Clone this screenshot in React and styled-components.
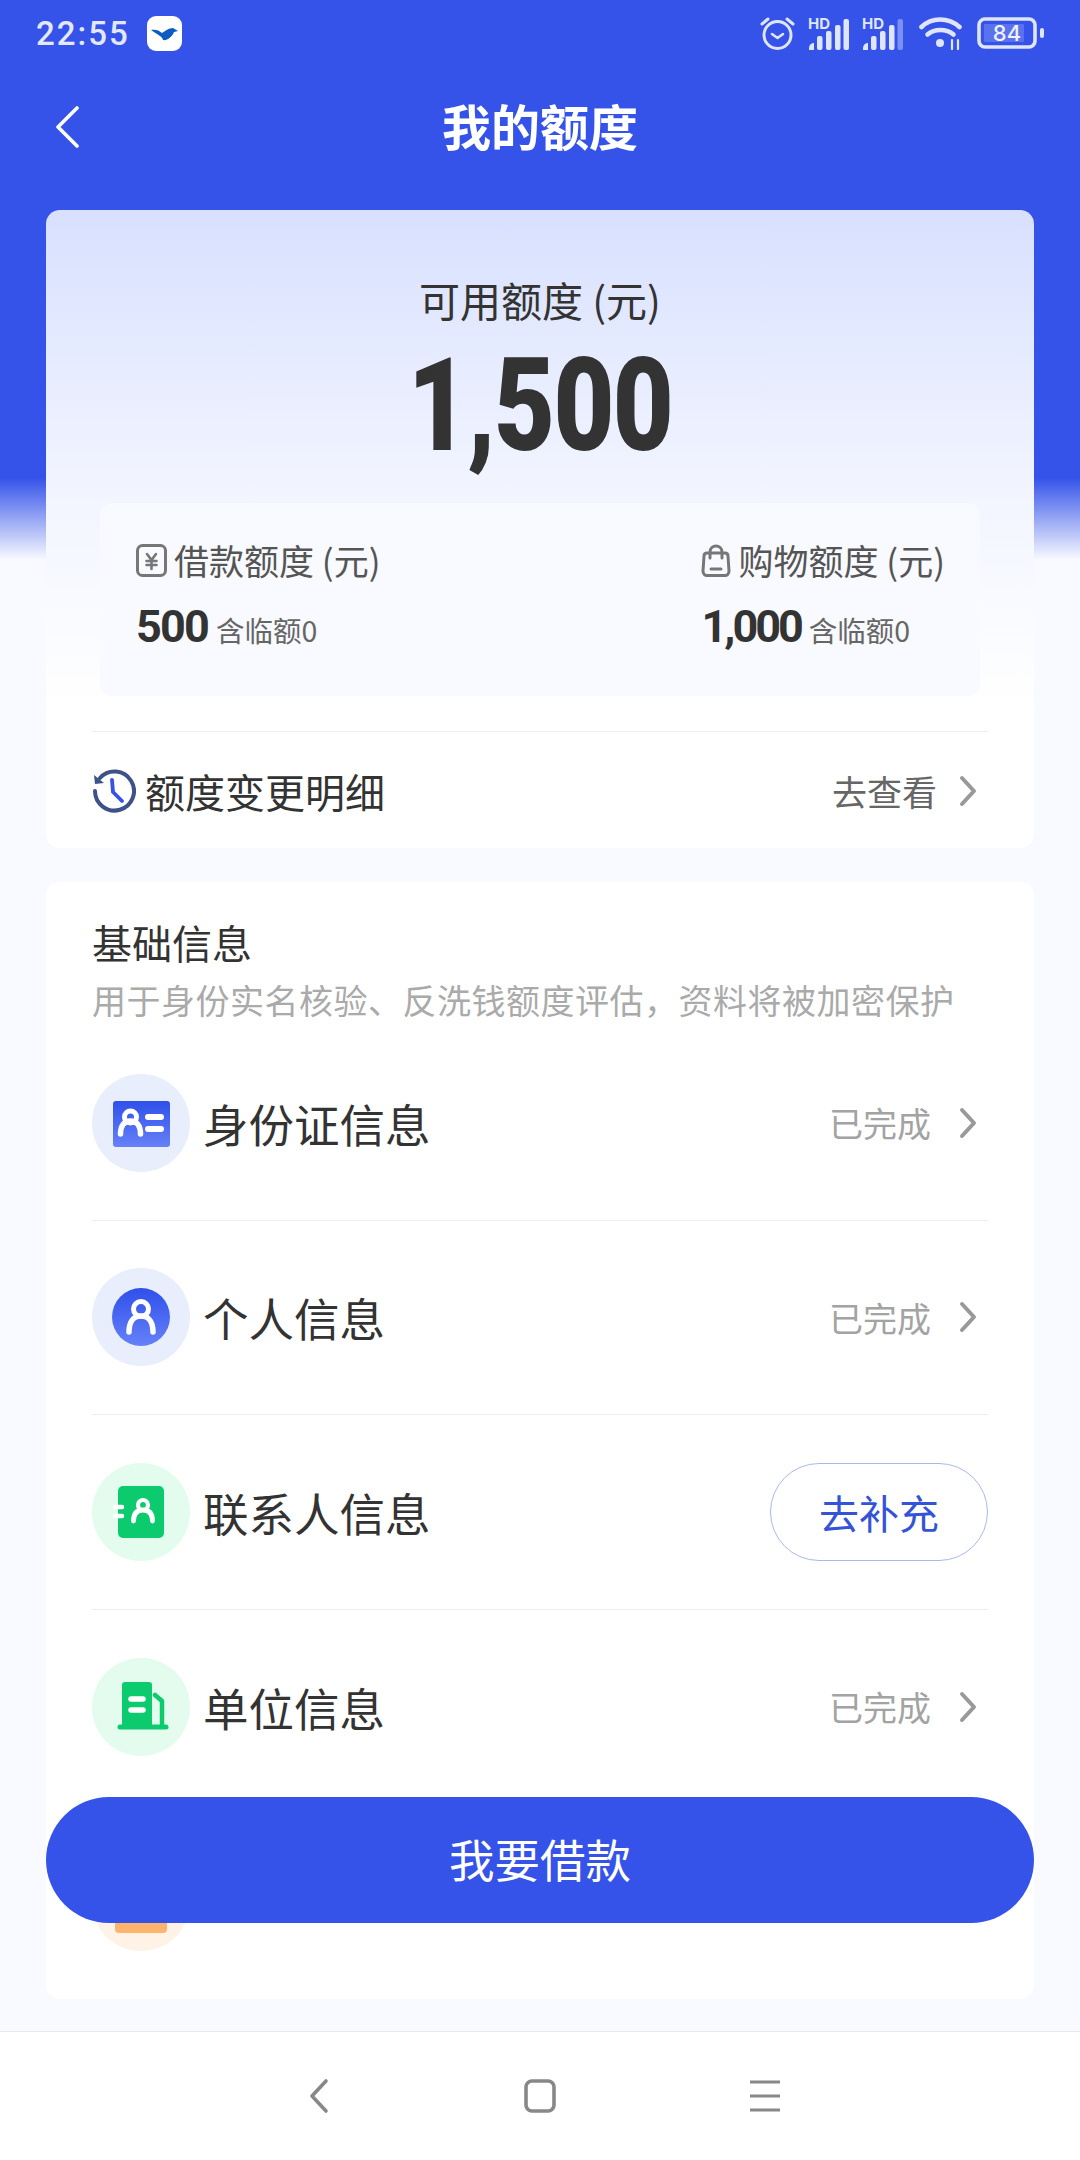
import React from 'react'
import styled, {createGlobalStyle} from 'styled-components'

const GlobalStyle = createGlobalStyle`
    html, body {
        margin: 0;
        padding: 0;
        background: #f8faff;
        font-family: "Noto Sans CJK SC", "Noto Sans", sans-serif;
    }
`;
const Page = styled.div`
    position: relative;
    width: 1080px;
    height: 2160px;
    overflow: hidden;
    display: flex;
    flex-direction: column;
    background: linear-gradient(180deg, #3553e9 0, #3553e9 478px, #f8faff 560px);
`;
const StatusBar = styled.div`
    height: 66px;
    padding: 0 35px 0 36px;
    display: flex;
    align-items: center;
    justify-content: space-between;
`;
const StatusGroup = styled.div`
    display: flex;
    align-items: center;
`;
const Time = styled.span`
    font-family: Roboto, sans-serif;
    font-weight: 500;
    font-size: 33px;
    letter-spacing: 2px;
    color: #e3e8fd;
    margin-right: 17px;
`;
const NavBar = styled.div`
    height: 122px;
    display: grid;
    grid-template-columns: 1fr auto 1fr;
    align-items: center;
    padding-left: 54px;
`;
const Title = styled.h1`
    margin: 0 0 4px;
    font-size: 49px;
    font-weight: 700;
    line-height: 60px;
    color: #fff;
    transform: translateX(-27px);
`;
const Content = styled.div`
    flex: 1;
    padding: 22px 46px 0;
    display: flex;
    flex-direction: column;
    gap: 34px;
`;
const LimitCard = styled.section`
    height: 638px;
    box-sizing: border-box;
    padding-top: 64px;
    border-radius: 14px;
    background: linear-gradient(180deg, #d8e0fe 0, #f2f5ff 280px, #fff 500px);
`;
const LimitLabel = styled.div`
    font-size: 41px;
    line-height: 50px;
    text-align: center;
    color: #333;
`;
const LimitAmount = styled.div`
    margin-top: 17px;
    height: 127px;
    font-family: Roboto, sans-serif;
    font-weight: 900;
    font-size: 130px;
    line-height: 130px;
    letter-spacing: -2px;
    text-align: center;
    color: #333;
    transform: scaleX(0.81);
`;
const SplitBox = styled.div`
    margin: 35px 54px 0;
    height: 193px;
    box-sizing: border-box;
    padding: 34px 35px 0 36px;
    display: flex;
    justify-content: space-between;
    background: #f8faff;
    border-radius: 12px;
`;
const SplitLabel = styled.div`
    display: flex;
    align-items: center;
    gap: 7px;
    font-size: 35px;
    line-height: 46px;
    color: #555;
`;
const SplitValue = styled.div`
    margin-top: 21px;
    display: flex;
    align-items: baseline;
    gap: 8px;
    line-height: 46px;
`;
const ValueNumber = styled.span`
    font-family: Roboto, sans-serif;
    font-weight: 700;
    font-size: 45px;
    letter-spacing: ${props => props.$tight ? '-3px' : '-1.8px'};
    color: #333;
`;
const ValueNote = styled.span`
    font-size: 28.5px;
    color: #666;
`;
const DetailRow = styled.div`
    margin: 35px 46px 0;
    height: 117px;
    border-top: 1.5px solid #eeeeee;
    display: flex;
    align-items: center;
    justify-content: space-between;
`;
const DetailName = styled.div`
    display: flex;
    align-items: center;
    gap: 9px;
    font-size: 40px;
    color: #333;
`;
const RowSide = styled.div`
    display: flex;
    align-items: center;
    gap: ${props => props.$muted ? '28px' : '22px'};
    padding-right: 11px;
    font-size: ${props => props.$muted ? '34px' : '35px'};
    color: ${props => props.$muted ? '#a3a3a3' : '#666'};
`;
const InfoCard = styled.section`
    padding: 35px 46px 0;
    border-radius: 14px;
    background: #fff;
`;
const InfoTitle = styled.div`
    font-size: 40px;
    line-height: 50px;
    color: #333;
`;
const InfoSub = styled.div`
    margin-top: 10px;
    margin-bottom: 3px;
    font-size: 34px;
    line-height: 46px;
    letter-spacing: 0.5px;
    white-space: nowrap;
    color: #aaa;
`;
const InfoRow = styled.div`
    height: 194.6px;
    box-sizing: border-box;
    display: flex;
    align-items: center;
    gap: 13px;
    border-bottom: ${props => props.$last ? 'none' : '1.5px solid #eeeeee'};
`;
const InfoName = styled.div`
    flex: 1;
    font-size: 45.5px;
    color: #333;
`;
const FillButton = styled.button`
    width: 218px;
    height: 98px;
    padding: 0;
    border: 1.5px solid #a9b8e8;
    border-radius: 49px;
    background: #fff;
    font-family: inherit;
    font-size: 40px;
    color: #3553d6;
`;
const LoanButton = styled.button`
    position: absolute;
    left: 46px;
    top: 1797px;
    width: 988px;
    height: 126px;
    padding: 0 0 4px;
    border: none;
    border-radius: 63px;
    background: #3553e9;
    font-family: inherit;
    font-size: 45.5px;
    color: #fff;
`;
const BottomNav = styled.nav`
    height: 129px;
    box-sizing: border-box;
    padding: 0 299px 0 306px;
    border-top: 1.5px solid #e8e8e8;
    background: #fff;
    display: flex;
    align-items: center;
    justify-content: space-between;
`;

const Chevron = ({color = '#999'}) => (
    <svg width="18" height="32" viewBox="0 0 18 32" fill="none">
        <path d="M3 3l12 13L3 29" stroke={color} strokeWidth="4" strokeLinecap="round" strokeLinejoin="round" />
    </svg>
);

const AppBadge = () => (
    <svg width="35" height="35" viewBox="0 0 35 35">
        <rect width="35" height="35" rx="9" fill="#fff" />
        <path d="M4 14c4-1 8 0 11 3 3-2 7-5 11-5l5 3-4 1c-2 5-7 9-11 8 0-3-5-5-12-10z" fill="#0d5cc0" />
    </svg>
);

const Alarm = () => (
    <svg width="35" height="36" viewBox="0 0 35 36" fill="none" stroke="#dfe5fd" strokeLinecap="round" strokeLinejoin="round" style={{marginRight: 13}}>
        <circle cx="17.5" cy="20" r="13.5" strokeWidth="3" />
        <path d="M12 19l5.5 4 5.500-4" strokeWidth="2.600" />
        <path d="M2 9l6-5M33 9l-6-5" strokeWidth="3" />
    </svg>
);

const Signal = ({dim, mr}) => (
    <svg width="41" height="34" viewBox="0 0 41 34" style={{marginRight: mr, overflow: 'visible'}}>
        <text x="0" y="13" fontFamily="Inter, sans-serif" fontSize="15" fontWeight="700" fill="#dfe5fd">HD</text>
        <path d="M1 34v-2a5 5 0 0 1 5-5v7z" fill="#dfe5fd" />
        <rect x="9" y="20" width="5.500" height="14" rx="2" fill="#dfe5fd" />
        <rect x="18" y="15" width="5.500" height="19" rx="2" fill="#dfe5fd" />
        <rect x="27" y="9" width="5.500" height="25" rx="2" fill="#dfe5fd" />
        <rect x="35.500" y="3" width="5.500" height="31" rx="2" fill={dim ? '#7a90f2' : '#dfe5fd'} />
    </svg>
);

const Wifi = () => (
    <svg width="43" height="34" viewBox="0 0 43 34" fill="none" stroke="#dfe5fd" strokeLinecap="round" style={{marginRight: 15}}>
        <path d="M2.500 11c10-10 27-10 38 0" strokeWidth="4.600" />
        <path d="M8.500 18.500c7-6 19-6 26 0" strokeWidth="4.600" />
        <circle cx="21" cy="27" r="4" fill="#dfe5fd" stroke="none" />
        <path d="M33 24v9M39 24v9" strokeWidth="2.200" />
    </svg>
);

const Battery = () => (
    <svg width="68" height="32" viewBox="0 0 68 32">
        <rect x="2" y="2" width="56" height="28" rx="6" fill="none" stroke="#dfe5fd" strokeWidth="3.600" />
        <rect x="7" y="7" width="40" height="18" rx="1" fill="#5a72ee" />
        <text x="30" y="23.500" textAnchor="middle" fontFamily="Inter, sans-serif" fontSize="22" fontWeight="500" fill="#eef1ff">84</text>
        <rect x="63" y="11" width="4" height="10" rx="2" fill="#dfe5fd" />
    </svg>
);

const BackArrow = () => (
    <svg width="26" height="42" viewBox="0 0 26 42" fill="none">
        <path d="M23 2L4 21l19 19" stroke="#fff" strokeWidth="3.600" strokeLinecap="round" strokeLinejoin="round" />
    </svg>
);

const YenIcon = () => (
    <svg width="31" height="33" viewBox="0 0 31 33" fill="none" stroke="#777" strokeLinecap="round">
        <rect x="1.500" y="1.500" width="28" height="30" rx="5" strokeWidth="3" />
        <path d="M11 10l4.500 6 4.500-6M10.500 17h10M10.500 21h10M15.500 16v9" strokeWidth="2.600" />
    </svg>
);

const BagIcon = () => (
    <svg width="30" height="33" viewBox="0 0 30 33" fill="none" stroke="#777" strokeLinecap="round" strokeLinejoin="round">
        <path d="M6 9h18c2 0 3 1 3 3l1 15c0 3-2 4.500-4 4.500H6c-2 0-4-1.500-4-4.500l1-15c0-2 1-3 3-3z" strokeWidth="3" />
        <path d="M9 14V8c0-4 3-6 6-6s6 2 6 6v6" strokeWidth="3" />
        <path d="M10 25h10" strokeWidth="3" />
    </svg>
);

const ClockIcon = () => (
    <svg width="44" height="44" viewBox="0 0 44 44" fill="none" strokeLinecap="round" strokeLinejoin="round">
        <path d="M8 9A19.500 19.500 0 1 1 3 22" stroke="#3f5189" strokeWidth="4" />
        <path d="M2 6l1 9 9-1z" fill="#3f5189" />
        <path d="M20 11l1 12 9 9" stroke="#3553e9" strokeWidth="3.800" />
    </svg>
);

const IdIcon = () => (
    <svg width="98" height="98" viewBox="0 0 98 98" fill="none" strokeLinecap="round">
        <defs>
            <linearGradient id="blueFill" x1="0" y1="0" x2="0" y2="1">
                <stop offset="0" stopColor="#2f50ea" />
                <stop offset="1" stopColor="#6681f8" />
            </linearGradient>
        </defs>
        <circle cx="49" cy="49" r="49" fill="#e9eefd" />
        <rect x="21" y="27" width="57" height="46" rx="3" fill="url(#blueFill)" />
        <circle cx="38.500" cy="43" r="6" stroke="#fff" strokeWidth="5" />
        <path d="M28.500 60c0-9 4-13 10-13s10 4 10 13" stroke="#fff" strokeWidth="5.500" />
        <path d="M56 43h13M56 55h13" stroke="#fff" strokeWidth="6" />
    </svg>
);

const PersonIcon = () => (
    <svg width="98" height="98" viewBox="0 0 98 98" fill="none" strokeLinecap="round">
        <defs>
            <linearGradient id="personFill" x1="0" y1="0" x2="0" y2="1">
                <stop offset="0" stopColor="#2f50ea" />
                <stop offset="1" stopColor="#6681f8" />
            </linearGradient>
        </defs>
        <circle cx="49" cy="49" r="49" fill="#e9eefd" />
        <circle cx="49" cy="49" r="29" fill="url(#personFill)" />
        <circle cx="49" cy="41" r="7.500" stroke="#fff" strokeWidth="5" />
        <path d="M37 64c0-11 5-16 12-16s12 5 12 16" stroke="#fff" strokeWidth="5.500" />
    </svg>
);

const ContactIcon = () => (
    <svg width="98" height="98" viewBox="0 0 98 98" fill="none" strokeLinecap="round">
        <circle cx="49" cy="49" r="49" fill="#e3fcee" />
        <rect x="26" y="23" width="46" height="52" rx="5" fill="#0ccb6e" />
        <path d="M23 44h7M23 53h7" stroke="#fff" strokeWidth="4.500" />
        <circle cx="51" cy="42" r="5" stroke="#fff" strokeWidth="4.200" />
        <path d="M41.500 58c0-7 3-11 9.500-11s9.500 4 9.500 11" stroke="#fff" strokeWidth="4.800" />
    </svg>
);

const BuildingIcon = () => (
    <svg width="98" height="98" viewBox="0 0 98 98" fill="none" strokeLinecap="round" strokeLinejoin="round">
        <circle cx="49" cy="49" r="49" fill="#e3fcee" />
        <path d="M30 27a3 3 0 0 1 3-3h24a3 3 0 0 1 3 3v41H30z" fill="#0ccb6e" />
        <path d="M28 69h46" stroke="#0ccb6e" strokeWidth="5" />
        <path d="M63 37l7 6v26" stroke="#0ccb6e" strokeWidth="4.500" />
        <path d="M39 41h12M39 52h12" stroke="#fff" strokeWidth="5.500" />
    </svg>
);

const OrangeIcon = () => (
    <svg width="98" height="98" viewBox="0 0 98 98">
        <circle cx="49" cy="49" r="49" fill="#fff2e6" />
        <rect x="23" y="52" width="52" height="28" rx="4" fill="#ffb46e" />
    </svg>
);

const rows = [
    {name: '身份证信息', icon: <IdIcon />},
    {name: '个人信息', icon: <PersonIcon />},
    {name: '联系人信息', icon: <ContactIcon />, action: true},
    {name: '单位信息', icon: <BuildingIcon />},
];

const App = () => {
    return (
        <Page>
            <GlobalStyle />
            <StatusBar>
                <StatusGroup>
                    <Time>22:55</Time>
                    <AppBadge />
                </StatusGroup>
                <StatusGroup>
                    <Alarm />
                    <Signal mr={13} />
                    <Signal dim mr={16} />
                    <Wifi />
                    <Battery />
                </StatusGroup>
            </StatusBar>
            <NavBar>
                <BackArrow />
                <Title>我的额度</Title>
            </NavBar>
            <Content>
                <LimitCard>
                    <LimitLabel>可用额度 (元)</LimitLabel>
                    <LimitAmount>1,500</LimitAmount>
                    <SplitBox>
                        <div>
                            <SplitLabel><YenIcon />借款额度 (元)</SplitLabel>
                            <SplitValue><ValueNumber>500</ValueNumber><ValueNote>含临额0</ValueNote></SplitValue>
                        </div>
                        <div>
                            <SplitLabel><BagIcon />购物额度 (元)</SplitLabel>
                            <SplitValue><ValueNumber $tight>1,000</ValueNumber><ValueNote>含临额0</ValueNote></SplitValue>
                        </div>
                    </SplitBox>
                    <DetailRow>
                        <DetailName><ClockIcon />额度变更明细</DetailName>
                        <RowSide>去查看<Chevron /></RowSide>
                    </DetailRow>
                </LimitCard>
                <InfoCard>
                    <InfoTitle>基础信息</InfoTitle>
                    <InfoSub>{'用于身份实名核验、反洗钱额度评估\uFF0C资料将被加密保护'}</InfoSub>
                    {rows.map(item => (
                        <InfoRow key={item.name}>
                            {item.icon}
                            <InfoName>{item.name}</InfoName>
                            {item.action
                                ? <FillButton>去补充</FillButton>
                                : <RowSide $muted>已完成<Chevron /></RowSide>}
                        </InfoRow>
                    ))}
                    <InfoRow $last><OrangeIcon /></InfoRow>
                </InfoCard>
            </Content>
            <LoanButton>我要借款</LoanButton>
            <BottomNav>
                <svg width="24" height="36" viewBox="0 0 24 36" fill="none">
                    <path d="M20 3L6 18l14 15" stroke="#888" strokeWidth="3.600" strokeLinecap="round" strokeLinejoin="round" />
                </svg>
                <svg width="32" height="34" viewBox="0 0 32 34" fill="none">
                    <rect x="2" y="2" width="28" height="30" rx="6" stroke="#888" strokeWidth="3.600" />
                </svg>
                <svg width="32" height="34" viewBox="0 0 32 34" fill="none">
                    <path d="M1 3h30M1 17h30M1 31h30" stroke="#888" strokeWidth="3.200" />
                </svg>
            </BottomNav>
        </Page>
    )
}
export default App;
